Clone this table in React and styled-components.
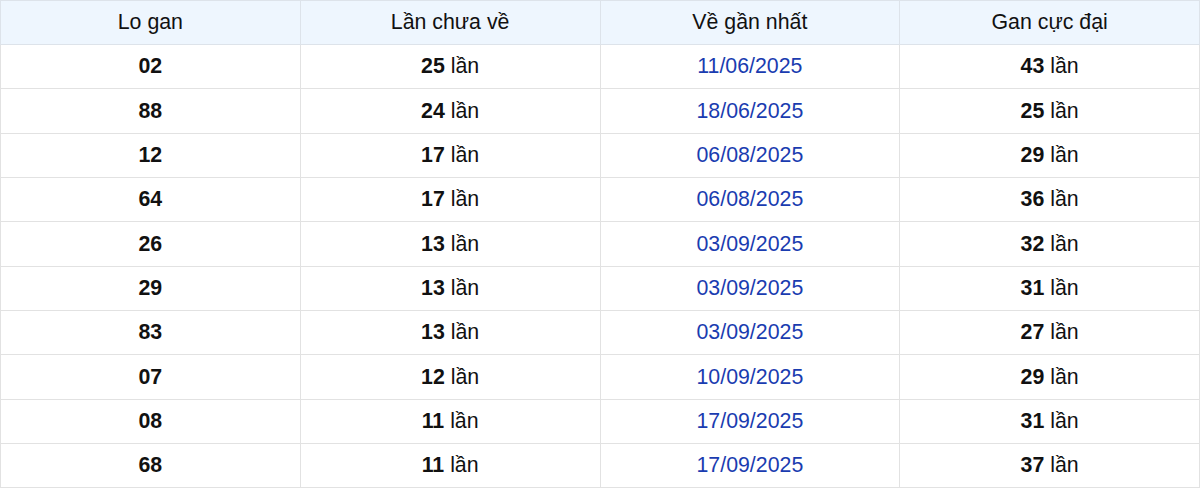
import React from "react";
import styled, { createGlobalStyle } from "styled-components";

const Global = createGlobalStyle`
  html, body { margin: 0; padding: 0; background: #fff; }
  body { font-family: "Liberation Sans", Arial, sans-serif; }
`;

const Table = styled.table`
  width: 1200px;
  border-collapse: collapse;
  table-layout: fixed;
  font-family: "Liberation Sans", Arial, sans-serif;
  font-size: 21.33px;
  line-height: 1.15;
  color: #111;
`;

const HeadCell = styled.th`
  height: 43px;
  padding: 0;
  font-weight: 400;
  background: #eef6fe;
  border: 1px solid #dde3ea;
  text-align: center;
  vertical-align: middle;
`;

const Cell = styled.td`
  height: 43.33px;
  padding: 0;
  border: 1px solid #e2e2e2;
  text-align: center;
  vertical-align: middle;
  color: ${(p) => (p.$date ? "#1a3cb0" : "#111")};
  font-weight: ${(p) => (p.$bold ? 700 : 400)};
`;

const Num = styled.b`
  font-weight: 700;
`;

const rows = [
  ["02", 25, "11/06/2025", 43],
  ["88", 24, "18/06/2025", 25],
  ["12", 17, "06/08/2025", 29],
  ["64", 17, "06/08/2025", 36],
  ["26", 13, "03/09/2025", 32],
  ["29", 13, "03/09/2025", 31],
  ["83", 13, "03/09/2025", 27],
  ["07", 12, "10/09/2025", 29],
  ["08", 11, "17/09/2025", 31],
  ["68", 11, "17/09/2025", 37],
];

export default function App() {
  return (
    <>
      <Global />
      <Table>
        <thead>
          <tr>
            <HeadCell>Lo gan</HeadCell>
            <HeadCell>Lần chưa về</HeadCell>
            <HeadCell>Về gần nhất</HeadCell>
            <HeadCell>Gan cực đại</HeadCell>
          </tr>
        </thead>
        <tbody>
          {rows.map(([lo, miss, date, max]) => (
            <tr key={lo}>
              <Cell $bold>{lo}</Cell>
              <Cell>
                <Num>{miss}</Num> lần
              </Cell>
              <Cell $date>{date}</Cell>
              <Cell>
                <Num>{max}</Num> lần
              </Cell>
            </tr>
          ))}
        </tbody>
      </Table>
    </>
  );
}
